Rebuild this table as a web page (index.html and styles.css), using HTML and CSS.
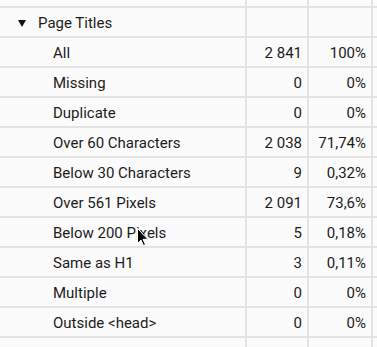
FILE: index.html
```html
<!DOCTYPE html>
<html>
<head>
<meta charset="utf-8">
<link rel="stylesheet" href="styles.css">
</head>
<body>
<div class="table">
  <div class="row top"><div class="c name"></div><div class="c num"></div><div class="c pct"></div><div class="c end"></div></div>
  <div class="row"><div class="c name group"><span class="tri"></span>Page Titles</div><div class="c num"></div><div class="c pct"></div><div class="c end"></div></div>
  <div class="row"><div class="c name">All</div><div class="c num">2 841</div><div class="c pct">100%</div><div class="c end"></div></div>
  <div class="row"><div class="c name">Missing</div><div class="c num">0</div><div class="c pct">0%</div><div class="c end"></div></div>
  <div class="row"><div class="c name">Duplicate</div><div class="c num">0</div><div class="c pct">0%</div><div class="c end"></div></div>
  <div class="row"><div class="c name">Over 60 Characters</div><div class="c num">2 038</div><div class="c pct">71,74%</div><div class="c end"></div></div>
  <div class="row"><div class="c name">Below 30 Characters</div><div class="c num">9</div><div class="c pct">0,32%</div><div class="c end"></div></div>
  <div class="row"><div class="c name">Over 561 Pixels</div><div class="c num">2 091</div><div class="c pct">73,6%</div><div class="c end"></div></div>
  <div class="row"><div class="c name">Below 200 Pixels</div><div class="c num">5</div><div class="c pct">0,18%</div><div class="c end"></div></div>
  <div class="row"><div class="c name">Same as H1</div><div class="c num">3</div><div class="c pct">0,11%</div><div class="c end"></div></div>
  <div class="row"><div class="c name">Multiple</div><div class="c num">0</div><div class="c pct">0%</div><div class="c end"></div></div>
  <div class="row"><div class="c name">Outside &lt;head&gt;</div><div class="c num">0</div><div class="c pct">0%</div><div class="c end"></div></div>
  <div class="row last"><div class="c name"></div><div class="c num"></div><div class="c pct"></div><div class="c end"></div></div>
</div>
<svg class="cursor" width="12" height="19" viewBox="0 0 12 19"><path d="M0.5 0.5 L0.5 15.5 L4 12 L6.5 17.5 L8.5 16.6 L6 11.3 L10.8 11.3 Z" fill="#000" stroke="#fff" stroke-width="1"/></svg>
</body>
</html>
```
FILE: styles.css
```css
html, body {
  margin: 0;
  padding: 0;
  background: #fbfbfb;
  overflow: hidden;
}
body {
  font-family: Roboto, "Noto Sans", sans-serif;
  font-size: 15px;
  color: #1c1c1c;
  position: relative;
  width: 377px;
  height: 347px;
}
.table {
  display: flex;
  flex-direction: column;
}
.row {
  display: grid;
  grid-template-columns: 247px 62px 64px 1fr;
  height: 30px;
  border-bottom: 2px solid #e3e3e3;
  box-sizing: border-box;
}
.row.top {
  height: 8px;
}
.row.last {
  height: 9px;
  border-bottom: none;
}
.c {
  border-right: 2px solid #e3e3e3;
  display: flex;
  align-items: center;
  white-space: nowrap;
  line-height: 1;
  padding-top: 2px;
  box-sizing: border-box;
}
.c.end {
  border-right: none;
}
.name {
  padding-left: 53px;
}
.name.group {
  padding-left: 18px;
}
.tri {
  width: 0;
  height: 0;
  border-left: 4.5px solid transparent;
  border-right: 4.5px solid transparent;
  border-top: 7px solid #111;
  margin-right: 12px;
}
.num, .pct {
  justify-content: flex-end;
  padding-right: 5px;
}
.cursor {
  position: absolute;
  left: 137px;
  top: 228px;
}
```
